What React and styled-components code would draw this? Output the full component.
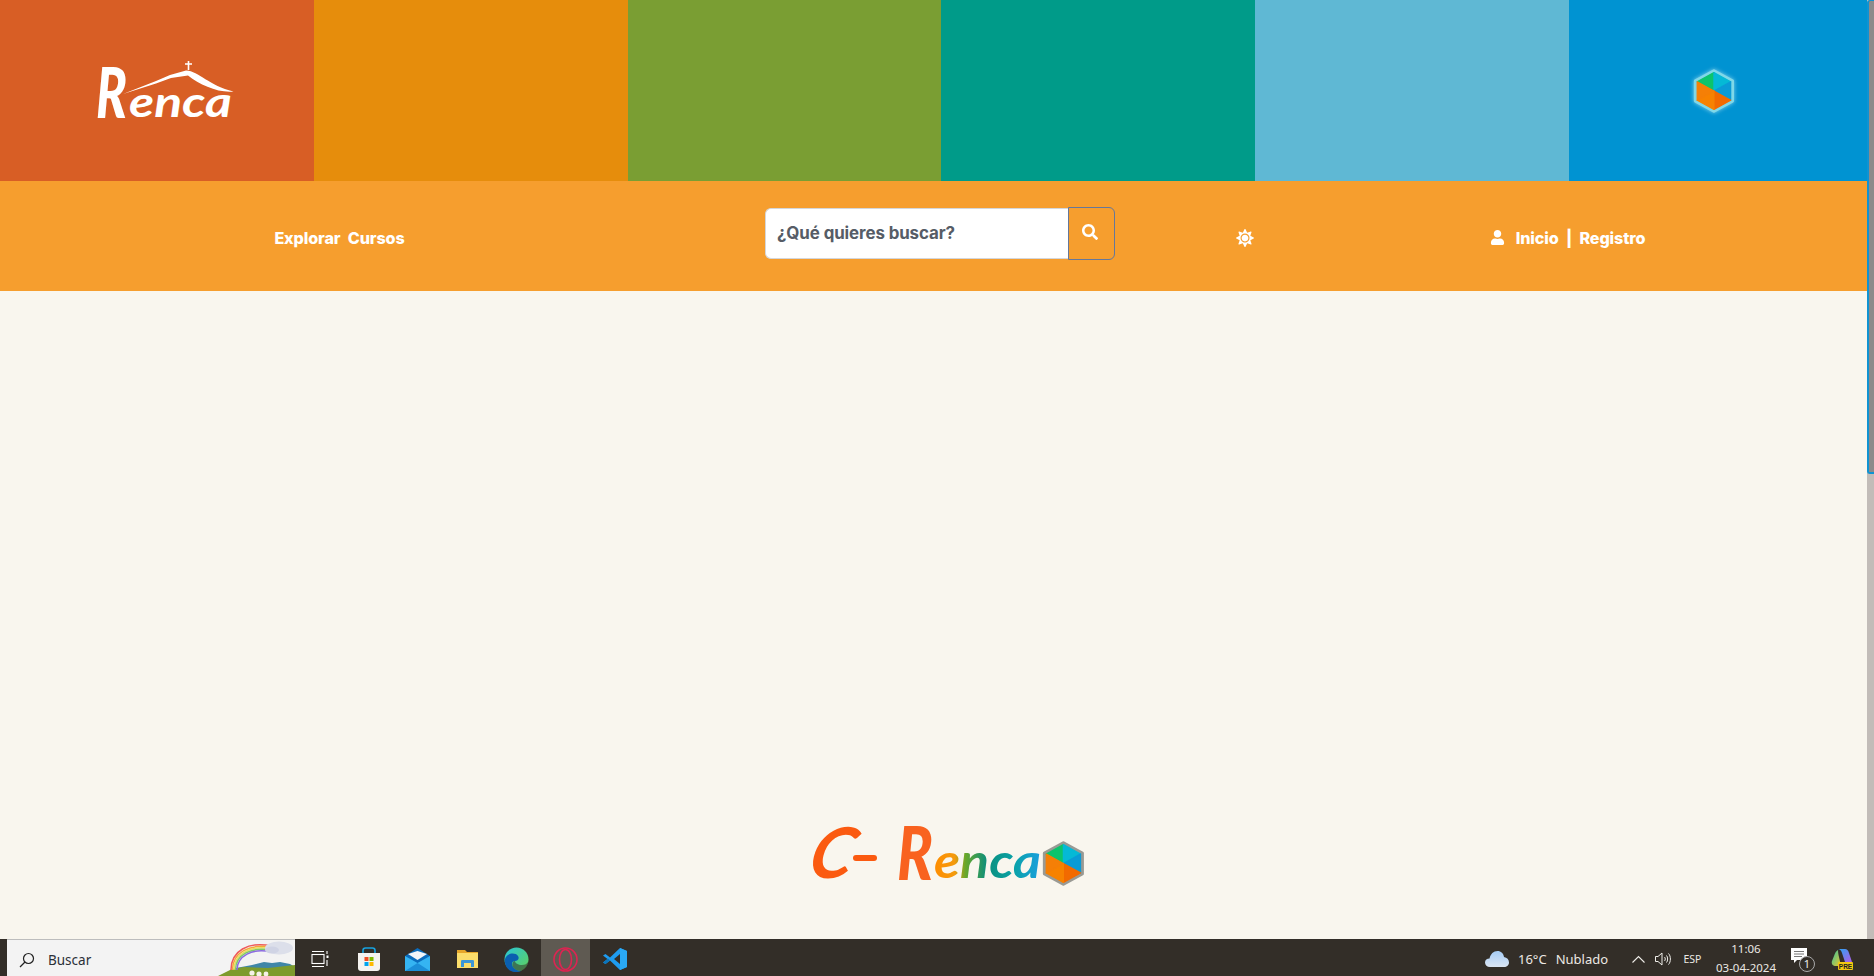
import React from "react";
import styled, { createGlobalStyle } from "styled-components";
import { FaSearch, FaSun, FaUser } from "react-icons/fa";

const Global = createGlobalStyle`
  html, body { margin: 0; padding: 0; height: 100%; overflow: hidden; background: #f9f6ee; }
  #root { height: 100%; }
`;

const Page = styled.div`
  display: flex; flex-direction: column; width: 1874px; height: 976px; overflow: hidden;
  font-family: "Inter", "Liberation Sans", sans-serif;
`;
const Viewport = styled.div` flex: 1; display: flex; min-height: 0; `;
const Content = styled.div` flex: 1; display: flex; flex-direction: column; min-width: 0; `;

const Scrollbar = styled.div`
  width: 7px; background: #c2bcb8; display: flex; flex-direction: column;
`;
const Thumb = styled.div`
  height: 474px; box-sizing: border-box; background: #8b8b8b;
  border-left: 2px solid #0f93d2; border-bottom: 2px solid #0f93d2; border-top: 1px solid #0f93d2;
  border-radius: 3px 0 0 3px;
`;

const Banner = styled.div`
  height: 181px; display: grid; grid-template-columns: 314px 314px 313px 314px 314px 298px;
`;
const Swatch = styled.div`
  background: ${p => p.$color}; display: flex; align-items: center; justify-content: ${p => p.$justify || "center"};
  padding-left: ${p => p.$left || 0}px; padding-right: ${p => p.$right || 0}px;
`;

const Nav = styled.nav`
  height: 110px; background: #f69e2e; color: #fff;
  display: grid; grid-template-columns: 679px 436px 260px 385px; align-items: center;
`;
const NavLink = styled.a`
  display: flex; align-items: center; justify-content: center; gap: 11px;
  font-size: 16.2px; font-weight: 800; letter-spacing: -0.15px; word-spacing: 4px; color: #fff; padding-top: 3px;
`;
const SearchForm = styled.form` display: flex; justify-content: flex-end; align-items: center; padding-bottom: 6px; `;
const SearchInput = styled.div`
  width: 303px; height: 51px; box-sizing: border-box; background: #fff; border: 1px solid #d4d6da; border-right: 0;
  border-radius: 6px 0 0 6px; padding-left: 11px; display: flex; align-items: center;
  font-size: 16.9px; font-weight: 700; color: #565c66; letter-spacing: -0.1px;
`;
const SearchButton = styled.button`
  width: 47px; height: 53px; box-sizing: border-box; background: transparent; color: #fff;
  border: 1px solid #65779a; border-radius: 0 6px 6px 0; padding: 0 4px 2px 0; font-size: 16px;
  display: flex; align-items: center; justify-content: center;
`;
const GearCell = styled.div` display: flex; justify-content: center; align-items: center; font-size: 18px; padding-top: 4px; `;

const Main = styled.main`
  flex: 1; background: #f9f6ee; display: flex; align-items: flex-end; justify-content: center;
  padding: 0 0 52px 26px;
`;

const Taskbar = styled.footer`
  height: 37px; background: #332e28; display: flex; align-items: stretch; color: #fff;
  font-family: "Noto Sans", "Open Sans", sans-serif;
`;
const SearchBox = styled.div`
  width: 288px; margin-left: 7px; box-sizing: border-box; background: #f3f3f3; border-top: 1px solid #bdbdbd;
  display: flex; align-items: center; color: #222; font-size: 13.5px; padding: 3px 0 0 12px; overflow: hidden;
`;
const BoxArt = styled.div` align-self: flex-end; display: flex; `;
const SearchLabel = styled.span` margin-left: 13px; flex: 1; color: #2b3038; `;
const TaskButton = styled.div`
  width: 49.2px; box-sizing: border-box; padding-top: 3px; display: flex; align-items: center; justify-content: center;
  background: ${p => (p.$active ? "#5f5a52" : "transparent")};
`;
const Tray = styled.div` margin-left: auto; display: flex; align-items: stretch; padding-right: 14px; `;
const TrayCell = styled.div`
  width: ${p => p.$w}px; box-sizing: border-box; padding-top: 3px; display: flex; align-items: center;
  justify-content: ${p => p.$justify || "center"};
  gap: ${p => p.$gap || 0}px; font-size: ${p => p.$size || 12}px; color: #ece9e4; text-align: center;
`;
const Clock = styled.div` font-size: 11.5px; line-height: 19px; color: #ece9e4; white-space: nowrap; margin-top: -2px; `;

const HexSvg = styled.svg`
  overflow: visible; flex: none;
  filter: ${p => (p.$glow ? "drop-shadow(0 0 2px rgba(190,235,245,.7))" : "none")};
`;
const Hexagon = ({ size = 43, edge = "#7fd8e8", glow }) => {
  const w = size * 0.91;
  const seg = (d, c) => <path d={d} fill={c} stroke={c} strokeWidth="1.5" strokeLinejoin="round" />;
  return (
    <HexSvg $glow={glow} width={w} height={size} viewBox="-2 -2 50 54">
      <path d="M23 1 45 13V37L23 49 1 37V13Z" fill={edge} stroke={edge} strokeWidth="4" strokeLinejoin="round" />
      {seg("M3 14 23 3 23 25Z", "#0cc46c")}
      {seg("M23 3 43 14 23 25Z", "#05b9d6")}
      {seg("M43 14V36L23 25Z", "#0a9bd6")}
      {seg("M43 36 23 47 23 25Z", "#f26a00")}
      {seg("M23 47 3 36 23 25Z", "#f78200")}
      {seg("M3 36V14L23 25Z", "#f57f06")}
    </HexSvg>
  );
};

const LogoSvg = styled.svg` overflow: visible; flex: none; `;
const Script = styled.text`
  font-family: "Lato", "Liberation Sans", sans-serif; font-style: italic; font-weight: ${p => p.$weight || 900};
`;

const RencaWhite = () => (
  <LogoSvg width="140" height="60" viewBox="0 0 140 60">
    <path d="M92.500 0v9M89 3h7" stroke="#fff" strokeWidth="1.6" />
    <path d="M27 33 60 20 74 14 90 9.500C103 10 113 25 137.500 30.500 122 32 104 24 92 14.500L75 17 60 22.500Z" fill="#fff" />
    <Script x="0" y="57" fontSize="70" fill="#fff" textLength="31" lengthAdjust="spacingAndGlyphs">R</Script>
    <Script x="33" y="56" fontSize="42" fill="#fff" $weight={700} textLength="103" lengthAdjust="spacingAndGlyphs">enca</Script>
  </LogoSvg>
);

const CRenca = () => (
  <LogoSvg width="277" height="62" viewBox="0 0 277 62">
    <defs>
      <linearGradient id="rencaGrad" x1="125" x2="233" y1="0" y2="0" gradientUnits="userSpaceOnUse">
        <stop offset="0" stopColor="#ff8c00" />
        <stop offset="0.2" stopColor="#f59a0c" />
        <stop offset="0.3" stopColor="#6aa82a" />
        <stop offset="0.5" stopColor="#0b8f7c" />
        <stop offset="0.75" stopColor="#0aa2a8" />
        <stop offset="1" stopColor="#1a9fdf" />
      </linearGradient>
    </defs>
    <Script x="11" y="53" fontSize="70" fill="#fb5a10" $weight={700} transform="skewX(-14)">C</Script>
    <rect x="45" y="30" width="24" height="6" rx="3" fill="#fb5a10" />
    <Script x="89" y="55" fontSize="74" fill="#f9621f" textLength="36" lengthAdjust="spacingAndGlyphs">R</Script>
    <Script x="126" y="53" fontSize="48" fill="url(#rencaGrad)" $weight={700} textLength="107" lengthAdjust="spacingAndGlyphs">enca</Script>
    <g transform="translate(234 15)"><Hexagon size={47} edge="#9a9a94" /></g>
  </LogoSvg>
);

const SearchGlass = () => (
  <svg width="16" height="16" viewBox="0 0 16 16" fill="none" stroke="#222" strokeWidth="1.2">
    <circle cx="9.500" cy="6.500" r="5" /><path d="M6 10 1 15" />
  </svg>
);

const Rainbow = () => (
  <svg width="77" height="36" viewBox="0 0 77 36">
    <path d="M18 28 34 25 46 22 54 23 62 22 72 24 77 27V30H18Z" fill="#3f86a8" />
    <path d="M0 36 14 29 26 27 50 28 77 25V36Z" fill="#7d9b2c" />
    <g fill="none" strokeWidth="1.5">
      <path d="M13 30C13 11 30 1 54 6" stroke="#ef5a5a" />
      <path d="M14.500 30C14.500 13 31 3 54 7.500" stroke="#f5a63c" />
      <path d="M16 30C16 14 32 4.500 54 9" stroke="#e8e05a" />
      <path d="M17.500 30C17.500 15 33 6 54 10.500" stroke="#7fc96a" />
      <path d="M19 30C19 16 34 7.500 54 12" stroke="#8b6be0" />
    </g>
    <ellipse cx="61" cy="8" rx="14" ry="6.500" fill="#dcdfea" />
    <ellipse cx="54" cy="10" rx="7" ry="3.500" fill="#cfd3e4" />
    <circle cx="34" cy="33" r="2.600" fill="#f4f2e6" /><circle cx="41" cy="34" r="2.600" fill="#f4f2e6" /><circle cx="48" cy="34" r="2.400" fill="#f4f2e6" />
  </svg>
);

const TaskView = () => (
  <svg width="18" height="16" viewBox="0 0 18 16" fill="none" stroke="#fff" strokeWidth="1.1">
    <path d="M1 .5H13M1 15.500H13" /><rect x="1" y="3.500" width="12" height="9" /><rect x="15.500" y="4.500" width="2" height="2.500" fill="#fff" stroke="none" /><path d="M16 0V3M16 9V15" />
  </svg>
);
const StoreIcon = () => (
  <svg width="24" height="25" viewBox="0 0 24 25">
    <path d="M6 7V3.500C6 2 7 1 8.500 1H15.500C17 1 18 2 18 3.500V7" fill="none" stroke="#17a3e0" strokeWidth="1.6" />
    <path d="M1 6H23V21C23 23 22 24 20 24H4C2 24 1 23 1 21Z" fill="#f5f3f0" />
    <rect x="7.500" y="10" width="4" height="4" fill="#f04e23" /><rect x="12.500" y="10" width="4" height="4" fill="#7fba00" />
    <rect x="7.500" y="15" width="4" height="4" fill="#00a4ef" /><rect x="12.500" y="15" width="4" height="4" fill="#ffb900" />
  </svg>
);
const MailIcon = () => (
  <svg width="25" height="23" viewBox="0 0 25 23">
    <path d="M12.500 0 25 8V23H0V8Z" fill="#0a6cbd" />
    <path d="M3 6 12.500 3 22 6 12.500 12Z" fill="#f1f5f9" />
    <path d="M0 8 12.500 15 25 8V23H0Z" fill="#35b4f2" />
    <path d="M0 23 12.500 15 25 23Z" fill="#1b8ed8" />
  </svg>
);
const FolderIcon = () => (
  <svg width="23" height="20" viewBox="0 0 23 20">
    <path d="M1 1H9L11 3H22V19H1Z" fill="#e6a62a" />
    <path d="M1 4H22V19H1Z" fill="#fbdd6b" />
    <path d="M5 18V12C5 11 6 11 6.500 11H16.500C17 11 18 11 18 12V18H15V14H8V18Z" fill="#3c96d8" />
  </svg>
);
const EdgeIcon = () => (
  <svg width="25" height="25" viewBox="0 0 25 25">
    <defs>
      <linearGradient id="edgeA" x1="0" x2="1" y1="0" y2="1"><stop offset="0" stopColor="#29c6d8" /><stop offset="1" stopColor="#62d256" /></linearGradient>
    </defs>
    <circle cx="12.500" cy="12.500" r="12" fill="url(#edgeA)" />
    <path d="M1 12C3 6 11 5 14 9 16 12 13 14 11 14 8 14 7 17 9 20 11 23 15 24.500 18 23.500 14 26 6 26 2.500 20 1 17 .5 14 1 12Z" fill="#0a5fb0" />
    <path d="M24.500 14C23 17 21 18 18 18 14 18 11 16 11 14 9 14 7.500 17 9 20 11 23 15 24.500 18 23.500 22 21 24.500 18 24.500 14Z" fill="#332e28" opacity=".55" />
  </svg>
);
const OperaIcon = () => (
  <svg width="25" height="25" viewBox="0 0 25 25" fill="none" stroke="#dd2452" strokeWidth="1.6">
    <circle cx="12.500" cy="12.500" r="11.500" /><ellipse cx="12.500" cy="12.500" rx="6" ry="10" />
  </svg>
);
const VSCodeIcon = () => (
  <svg width="24" height="24" viewBox="0 0 24 24">
    <path d="M17 1 24 4V20L17 23 7 13.500 2.500 17 0 15.500 4.500 12 0 8.500 2.500 7 7 10.500ZM17 7 11 12 17 17Z" fill="#1f9cf0" />
    <path d="M17 1 24 4V20L17 23Z" fill="#2aa9f5" />
    <path d="M0 15.500 2.500 17 7 13.500 5 11.500Z" fill="#0a75bd" />
  </svg>
);
const CloudIcon = () => (
  <svg width="24" height="16" viewBox="0 0 24 16">
    <defs><linearGradient id="cloudG" x1="0" x2="0" y1="0" y2="1"><stop offset="0" stopColor="#a5ccf5" /><stop offset="1" stopColor="#dbe5f2" /></linearGradient></defs>
    <path d="M5 16C2 16 0 14 0 11.500 0 9 2 7.500 4.500 7.500 5.500 3 8.500 0 12.500 0 16 0 18.500 2.500 19 6 22 6.500 24 8.500 24 11.500 24 14 22 16 19 16Z" fill="url(#cloudG)" />
  </svg>
);
const Chevron = () => (
  <svg width="13" height="8" viewBox="0 0 13 8" fill="none" stroke="#f0eeea" strokeWidth="1.1"><path d="M.5 7.500 6.500 1.500 12.500 7.500" /></svg>
);
const Speaker = () => (
  <svg width="17" height="14" viewBox="0 0 17 14" fill="none" stroke="#f0eeea" strokeWidth="1">
    <path d="M.5 4.500H3L7 1V13L3 9.500H.5Z" /><path d="M9.500 5C10.500 6 10.500 8 9.500 9M11.500 3.500C13 5 13 9 11.500 10.500M13.500 1.500C16 4 16 10 13.500 12.500" />
  </svg>
);
const Notify = () => (
  <svg width="26" height="26" viewBox="0 0 26 26">
    <path d="M1 2H17V14H7L4 17V14H1Z" fill="#fff" />
    <path d="M4 5.500H14M4 8H14M4 10.500H12" stroke="#555" strokeWidth=".8" />
    <circle cx="17" cy="18" r="7.500" fill="#332e28" stroke="#aaa" strokeWidth="1" />
    <text x="17" y="22" fontSize="11" fontFamily="'Noto Sans', sans-serif" textAnchor="middle" fill="#eee">1</text>
  </svg>
);
const Copilot = () => (
  <svg width="22" height="22" viewBox="0 0 22 22">
    <defs>
      <linearGradient id="copA" x1="0" x2="1" y1="0" y2="1"><stop offset="0" stopColor="#2aa4f4" /><stop offset="1" stopColor="#b05de5" /></linearGradient>
      <linearGradient id="copB" x1="0" x2="1" y1="0" y2="1"><stop offset="0" stopColor="#2fc4a0" /><stop offset="1" stopColor="#f0c429" /></linearGradient>
    </defs>
    <path d="M7 1H14C16 1 17 2 18 5L21 14H14L11 5C10.500 3 9 1 7 1Z" fill="url(#copA)" />
    <path d="M7 2C5 3 4 5 3 8L1 13C0 16 2 18 5 18H10L8 9C7.500 7 7 4 7 2Z" fill="url(#copB)" />
    <rect x="7" y="14" width="15" height="8" rx="1" fill="#f2c811" />
    <text x="14.500" y="20.500" fontSize="6.500" fontWeight="800" fontFamily="'Liberation Sans', sans-serif" textAnchor="middle" fill="#222">PRE</text>
  </svg>
);

const swatches = ["#e68d0c", "#7a9e33", "#009b89", "#5fb8d4"];
const apps = [<StoreIcon />, <MailIcon />, <FolderIcon />, <EdgeIcon />];

export default function App() {
  return (
    <Page>
      <Global />
      <Viewport>
        <Content>
          <Banner>
            <Swatch $color="#d85e25" $justify="flex-start" $left={96}><RencaWhite /></Swatch>
            {swatches.map(c => <Swatch key={c} $color={c} />)}
            <Swatch $color="#0093d2" $right={9}><Hexagon size={46} glow /></Swatch>
          </Banner>
          <Nav>
            <NavLink>Explorar Cursos</NavLink>
            <SearchForm>
              <SearchInput>¿Qué quieres buscar?</SearchInput>
              <SearchButton type="button"><FaSearch /></SearchButton>
            </SearchForm>
            <GearCell><FaSun /></GearCell>
            <NavLink><FaUser size={15} />Inicio | Registro</NavLink>
          </Nav>
          <Main><CRenca /></Main>
        </Content>
        <Scrollbar><Thumb /></Scrollbar>
      </Viewport>
      <Taskbar>
        <SearchBox>
          <SearchGlass />
          <SearchLabel>Buscar</SearchLabel>
          <BoxArt><Rainbow /></BoxArt>
        </SearchBox>
        <TaskButton><TaskView /></TaskButton>
        {apps.map((a, i) => <TaskButton key={i}>{a}</TaskButton>)}
        <TaskButton $active><OperaIcon /></TaskButton>
        <TaskButton><VSCodeIcon /></TaskButton>
        <Tray>
          <TrayCell $w={140} $size={13} $justify="flex-start" $gap={9}>
            <CloudIcon /><span>16°C</span><span>Nublado</span>
          </TrayCell>
          <TrayCell $w={26}><Chevron /></TrayCell>
          <TrayCell $w={24}><Speaker /></TrayCell>
          <TrayCell $w={35} $size={10.5}>ESP</TrayCell>
          <TrayCell $w={72}><Clock>11:06<br />03-04-2024</Clock></TrayCell>
          <TrayCell $w={42}><Notify /></TrayCell>
          <TrayCell $w={36}><Copilot /></TrayCell>
        </Tray>
      </Taskbar>
    </Page>
  );
}
